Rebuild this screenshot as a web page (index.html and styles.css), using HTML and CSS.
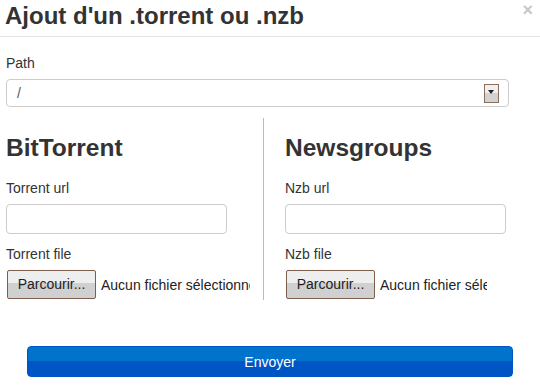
FILE: index.html
```
<html>
	<head>
		<title>Ajout d'un .torrent ou .nzb</title>
		<link rel="stylesheet" href="styles.css">
	</head>
	<body>
<div class="modal">
	<div class="modal-header">
		<h1>Ajout d'un .torrent ou .nzb</h1>
		<span class="close">&times;</span>
	</div>
	<div class="modal-body">
		<label class="lbl">Path</label>
		<div class="select">
			<span class="value">/</span>
			<span class="arrow"></span>
		</div>
		<div class="columns">
			<section class="col left">
				<h2>BitTorrent</h2>
				<label class="lbl">Torrent url</label>
				<div class="input"></div>
				<label class="lbl">Torrent file</label>
				<div class="file">
					<span class="browse">Parcourir...</span>
					<span class="none">Aucun fichier sélectionné</span>
				</div>
			</section>
			<section class="col right">
				<h2>Newsgroups</h2>
				<label class="lbl">Nzb url</label>
				<div class="input"></div>
				<label class="lbl">Nzb file</label>
				<div class="file">
					<span class="browse">Parcourir...</span>
					<span class="none">Aucun fichier sélectionné</span>
				</div>
			</section>
		</div>
		<div class="footer">
			<button class="send">Envoyer</button>
		</div>
	</div>
</div>
	</body>
</html>
```

FILE: styles.css
```
BODY {
	margin: 0;
	background: #fff;
	font-family: "Liberation Sans", Arial, sans-serif;
	font-size: 14px;
	color: #333;
	}
.modal-header {
	border-bottom: 1px solid #e5e5e5;
	display: flex;
	justify-content: space-between;
	height: 37px;
	box-sizing: border-box;
	padding: 0 7px 0 5px;
	}
.modal-header h1 {
	font-size: 24px;
	font-weight: bold;
	margin: 2px 0 0;
	line-height: 28px;
	color: #333;
	}
.close {
	color: #c8c8c8;
	font-size: 18px;
	font-weight: bold;
	line-height: 20px;
	margin-top: 0;
	}
.modal-body {
	padding: 18px 6px 0 6px;
	}
.lbl {
	display: block;
	line-height: 16px;
	margin-bottom: 8px;
	}
.select {
	width: 503px;
	height: 28px;
	border: 1px solid #ccc;
	border-radius: 4px;
	box-sizing: border-box;
	display: flex;
	align-items: center;
	justify-content: space-between;
	padding: 0 9px 0 10px;
	}
.select .value { color: #555; }
.arrow {
	width: 15px;
	height: 19px;
	box-sizing: border-box;
	border: 1px solid #8a6f5e;
	background: linear-gradient(#f0f0f0 45%, #d2d2d2 45%);
	position: relative;
	}
.arrow::after {
	content: "";
	position: absolute;
	left: 3px;
	top: 5px;
	border-left: 3.5px solid transparent;
	border-right: 3.5px solid transparent;
	border-top: 4px solid #222;
	}
.columns {
	display: flex;
	margin-top: 11px;
	}
.col {
	width: 258px;
	box-sizing: border-box;
	padding-bottom: 1px;
	overflow: hidden;
	}
.col.left {
	border-right: 1px solid #bbb;
	padding-right: 14px;
	}
.col.right {
	padding-left: 21px;
	}
.col h2 {
	font-size: 24.5px;
	font-weight: bold;
	margin: 16px 0 0;
	line-height: 28px;
	}
.col .lbl {
	margin-top: 18px;
	}
.input {
	width: 221px;
	height: 30px;
	border: 1px solid #ccc;
	border-radius: 4px;
	box-sizing: border-box;
	}
.col .input + .lbl {
	margin-top: 12px;
	}
.file {
	display: flex;
	align-items: center;
	white-space: nowrap;
	}
.browse {
	flex-shrink: 0;
	display: inline-block;
	width: 89px;
	height: 29px;
	line-height: 27px;
	text-align: center;
	box-sizing: border-box;
	border: 1px solid #7d5e4f;
	border-radius: 2px;
	background: linear-gradient(#eeeeee 45%, #d0d0d0 45%);
	color: #222;
	margin-left: 1px;
	}
.none {
	margin-left: 5px;
	color: #222;
	}
.col.left .file { width: 244px; overflow: hidden; }
.col.right .file { width: 202px; overflow: hidden; }
.footer {
	padding: 46px 21px 0 21px;
	}
.send {
	width: 486px;
	height: 31px;
	border: 1px solid #0055c5;
	border-radius: 4px;
	background: linear-gradient(#0074cc 48%, #0055c5 48%);
	color: #fff;
	font-family: "Liberation Sans", Arial, sans-serif;
	font-size: 14px;
	padding: 0;
	}
```
